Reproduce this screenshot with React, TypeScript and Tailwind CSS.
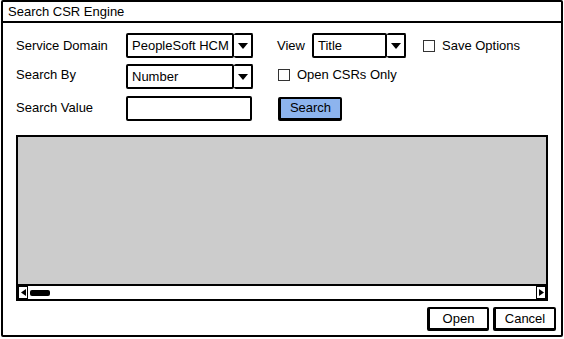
const Dropdown = ({ value, width }: { value: string; width: string }) => (
  <div className={`flex h-[25px] ${width}`}>
    <div className="flex flex-1 items-center border-2 border-black bg-white pl-[4px] text-[13px] rounded-[2px]">
      {value}
    </div>
    <div className="flex w-[19px] items-center justify-center border-2 border-l-0 border-black bg-white rounded-[2px]">
      <svg width="10" height="6" viewBox="0 0 10 6">
        <path d="M0 0 L10 0 L5 6 Z" fill="#000" />
      </svg>
    </div>
  </div>
);

const Checkbox = ({ label }: { label: string }) => (
  <div className="flex items-center gap-[7px] text-[13px]">
    <div className="h-[12px] w-[12px] border border-[#333] bg-white" />
    <span>{label}</span>
  </div>
);

const Button = ({ label, width, blue }: { label: string; width: string; blue?: boolean }) => (
  <button
    className={`flex h-[24px] ${width} items-center justify-center border-2 border-b-[3px] border-l-[3px] border-black text-[13px] rounded-[2px] ${
      blue ? "bg-[#8db4ee]" : "bg-white"
    }`}
  >
    {label}
  </button>
);

export default function App() {
  return (
    <div
      className="h-[339px] w-[564px] bg-white text-black"
      style={{ fontFamily: '"Liberation Sans", Arial, sans-serif' }}
    >
      <div className="ml-px flex h-[337px] w-[562px] flex-col border-2 border-black rounded-[2px]">
        <div className="flex h-[21px] items-center border-b-2 border-black pl-[5px] text-[13px]">
          Search CSR Engine
        </div>

        <div className="flex flex-1 flex-col px-[13px] pt-[10px]">
          <div className="flex h-[25px] items-center">
            <div className="w-[110px] text-[13px]">Service Domain</div>
            <Dropdown value="PeopleSoft HCM" width="w-[127px]" />
            <div className="ml-[24px] w-[35px] text-[13px]">View</div>
            <Dropdown value="Title" width="w-[94px]" />
            <div className="ml-[17px]">
              <Checkbox label="Save Options" />
            </div>
          </div>

          <div className="mt-[6px] flex h-[25px] items-center">
            <div className="w-[110px] pb-[4px] text-[13px]">Search By</div>
            <Dropdown value="Number" width="w-[127px]" />
            <div className="ml-[25px] pb-[4px]">
              <Checkbox label="Open CSRs Only" />
            </div>
          </div>

          <div className="mt-[7px] flex h-[25px] items-center">
            <div className="w-[110px] pb-[2px] text-[13px]">Search Value</div>
            <div className="h-[25px] w-[126px] border-2 border-black bg-white rounded-[2px]" />
            <div className="ml-[26px]">
              <Button label="Search" width="w-[64px]" blue />
            </div>
          </div>

          <div className="mt-[14px] flex h-[166px] w-[532px] flex-col border-2 border-black">
            <div className="flex-1 bg-[#cccccc]" />
            <div className="flex h-[15px] items-center border-t-2 border-black bg-white">
              <div className="flex h-[13px] w-[10px] items-center justify-center border border-black">
                <svg width="5" height="7" viewBox="0 0 5 7">
                  <path d="M5 0 L5 7 L0 3.5 Z" fill="#000" />
                </svg>
              </div>
              <div className="ml-[2px] h-[6px] w-[20px] rounded-[2px] bg-black" />
              <div className="flex-1" />
              <div className="flex h-[13px] w-[10px] items-center justify-center border border-black">
                <svg width="5" height="7" viewBox="0 0 5 7">
                  <path d="M0 0 L0 7 L5 3.5 Z" fill="#000" />
                </svg>
              </div>
            </div>
          </div>

          <div className="-mr-[8px] mt-[6px] flex justify-end gap-[4px]">
            <Button label="Open" width="w-[62px]" />
            <Button label="Cancel" width="w-[63px]" />
          </div>
        </div>
      </div>
    </div>
  );
}
